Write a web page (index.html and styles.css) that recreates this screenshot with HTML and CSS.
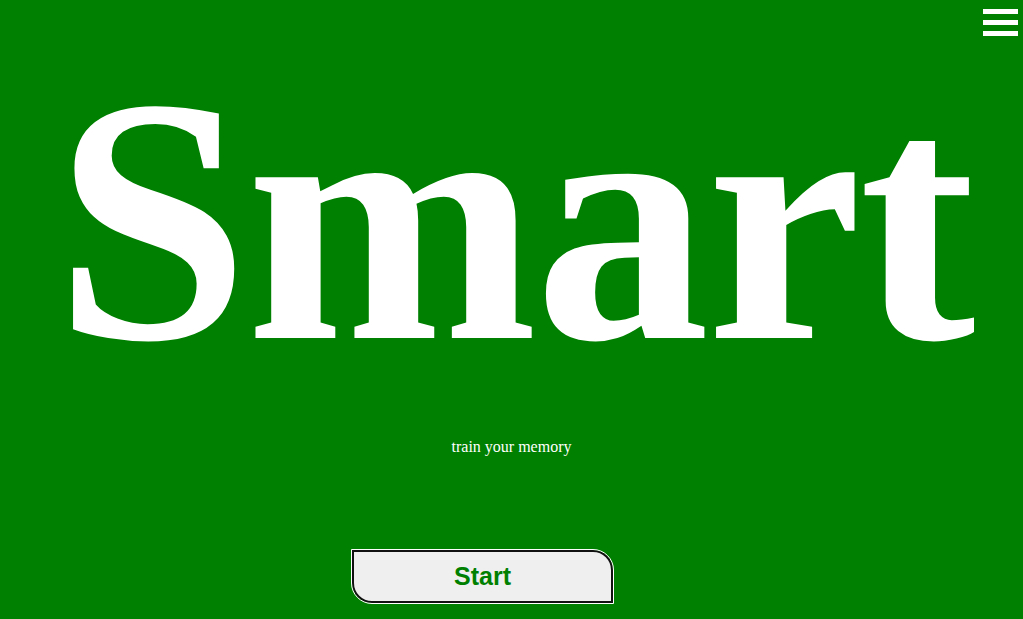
FILE: index.html
```html
<!DOCTYPE html>
<html>
<head>
<meta charset="utf-8">
<link rel="stylesheet" href="styles.css">
</head>
<body>
<div class="topbar">
  <div class="menu">
    <span class="bar"></span>
    <span class="bar"></span>
    <span class="bar"></span>
  </div>
</div>
<h1 class="title">Smart</h1>
<p class="subtitle">train your memory</p>
<div class="actions">
  <button class="start">Start</button>
</div>
</body>
</html>
```

FILE: styles.css
```css
html, body {
  margin: 0;
  padding: 0;
  background: #008000;
  height: 100%;
  overflow: hidden;
}
body {
  font-family: "Liberation Serif", "Times New Roman", serif;
  color: #fff;
}
.topbar {
  display: flex;
  justify-content: flex-end;
  padding: 9px 5px 0 0;
}
.menu {
  display: flex;
  flex-direction: column;
  gap: 6px;
}
.bar {
  display: block;
  width: 35px;
  height: 5px;
  background: #fff;
}
.title {
  margin: 0;
  text-align: center;
  font-size: 350px;
  font-weight: bold;
  line-height: 1;
  letter-spacing: -3px;
  padding-left: 4px;
  margin-top: 9px;
}
.subtitle {
  text-align: center;
  font-size: 16px;
  margin: 43px 0 0;
}
.actions {
  padding-left: 352px;
  margin-top: 94px;
}
.start {
  display: block;
  width: 261px;
  height: 53px;
  background: #efefef;
  color: #008000;
  font-family: "Liberation Sans", Arial, sans-serif;
  font-weight: bold;
  font-size: 25px;
  border: 2px solid #111;
  outline: 1px solid #fff;
  border-radius: 0 20px 0 20px;
  padding: 0;
}
```
